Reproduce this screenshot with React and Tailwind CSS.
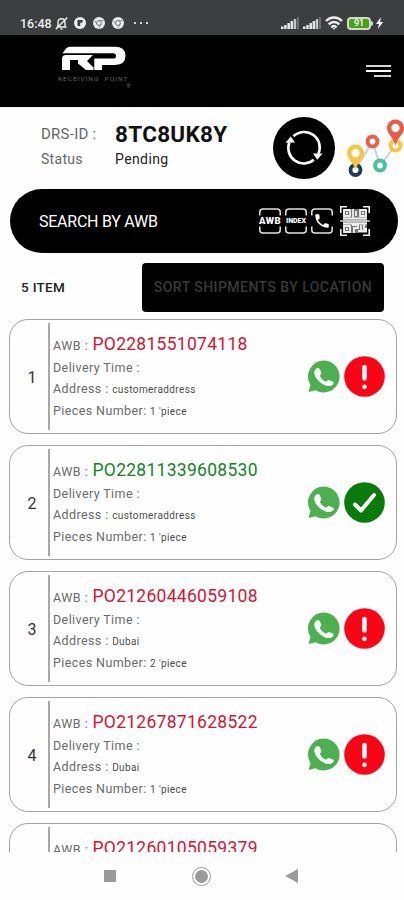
import { MdPhone } from "react-icons/md";

const shipments = [
    { id: 1, awb: "PO2281551074118", address: "customeraddress", pieces: 1, done: false },
    { id: 2, awb: "PO22811339608530", address: "customeraddress", pieces: 1, done: true },
    { id: 3, awb: "PO21260446059108", address: "Dubai", pieces: 2, done: false },
    { id: 4, awb: "PO21267871628522", address: "Dubai", pieces: 1, done: false },
    { id: 5, awb: "PO21260105059379", address: "Dubai", pieces: 1, done: false },
];

function Signal() {
    return (
        <svg className="w-[18px] h-3" viewBox="0 0 18 12" fill="#e4e6e6">
            <rect x="0" y="9.5" width="2.5" height="2.5" />
            <rect x="3.2" y="8" width="2.5" height="4" />
            <rect x="6.4" y="6" width="2.6" height="6" />
            <rect x="9.6" y="4" width="2.6" height="8" />
            <rect x="12.8" y="2" width="2.4" height="10" fill="#c4c7c7" />
            <rect x="16" y="0" width="2" height="12" fill="#6a6e6e" />
        </svg>
    );
}

function ChromeDot() {
    return (
        <svg className="w-3 h-3" viewBox="0 0 12 12">
            <circle cx="6" cy="6" r="6" fill="#e8eaea" />
            <circle cx="6" cy="6" r="2.4" fill="none" stroke="#75797a" strokeWidth="1" />
            <path d="M6 3.6h4.6M3.9 7.2L1.7 3.5M8.1 7.2L5.9 11" stroke="#75797a" strokeWidth=".8" />
        </svg>
    );
}

function StatusBar() {
    return (
        <div className="flex h-[35px] shrink-0 items-start bg-[#3b3f40] pl-5 pt-[16px] text-white">
            <span className="w-[33px] text-[12.5px] leading-[15px] font-medium text-[#eee]">16:48</span>
            <svg className="mt-px ml-[2px] w-[13px] h-[13px]" viewBox="0 0 13 13" fill="none" stroke="#eee" strokeWidth="1.4">
                <path d="M1.5 10h10M3 9.5V5.5C3 3 4.5 1.7 6.5 1.7S10 3 10 5.5v4M5.5 12h2M12.3.5L.8 12.3" />
            </svg>
            <svg className="mt-px ml-[6px] w-3 h-3" viewBox="0 0 12 12">
                <circle cx="6" cy="6" r="6" fill="#eee" />
                <path d="M3.5 3h5v2.8H6.2V9H3.5z" fill="#3b3f40" />
            </svg>
            <div className="ml-[7px] mt-px flex gap-[7px]">
                <ChromeDot />
                <ChromeDot />
            </div>
            <div className="ml-[10px] mt-[6px] flex gap-[4px]">
                <i className="h-[2px] w-[2px] bg-gray-300" />
                <i className="h-[2px] w-[2px] bg-gray-300" />
                <i className="h-[2px] w-[2px] bg-gray-300" />
            </div>
            <div className="ml-auto mr-[21px] flex items-center gap-[4px]">
                <Signal />
                <Signal />
                <svg className="w-[18px] h-[14px]" viewBox="0 0 18 14" fill="none" stroke="#eee" strokeWidth="2.4">
                    <path d="M1 5C5.5.3 12.5.3 17 5M3.7 8.3c3-3 7.6-3 10.6 0M6.3 11.3c1.7-1.6 3.7-1.6 5.4 0" />
                    <path d="M7.5 12L9 13.8l1.5-1.8z" fill="#eee" stroke="none" />
                </svg>
                <div className="flex items-center">
                    <div className="flex h-[13px] w-6 items-center justify-center rounded-[4px] border-2 border-[#d3d6d3] bg-[#43a514] text-[9px] leading-none font-medium">91</div>
                    <i className="h-[5px] w-[2px] rounded-r bg-[#d3d6d3]" />
                    <svg className="ml-[3px] w-[7px] h-3" viewBox="0 0 7 12" fill="#fff"><path d="M5 0L0 7h3L2 12l5-7H4z" /></svg>
                </div>
            </div>
        </div>
    );
}

function Header() {
    return (
        <div className="flex h-[72px] shrink-0 items-start justify-between bg-black">
            <div className="ml-[58px] mt-[11px] w-[73px]">
                <svg className="ml-1 block h-6 w-[64px]" viewBox="0 0 64 24" fill="#fff">
                    <path d="M.5 7.3L4 2.5Q5.5.7 8 .7H53Q63.5.7 63.5 9.800T53 19H40V24H32.3V12.600H51Q54 12.600 54 10T51 7.300z" />
                    <path d="M0 13Q0 9 4 9H31L25 15L31.5 21.500V24H24L16 17.500V14H8V24H0z" />
                </svg>
                <div className="mt-[6px] h-[7px] text-[6.5px] leading-[7px] whitespace-nowrap text-[#666] origin-left scale-y-75 tracking-[1px]">RECEIVING&nbsp; POINT</div>
                <div className="text-right text-[6px] leading-[6px] text-[#666]">®</div>
            </div>
            <div className="mr-[13px] mt-[30px] flex flex-col items-end gap-[3px]">
                <i className="h-[2px] w-[25px] bg-[#d6d6d6]" />
                <i className="h-[2px] w-[25px] bg-white" />
                <i className="h-[2px] w-[17px] bg-[#d6d6d6]" />
            </div>
        </div>
    );
}

function RouteIcon() {
    return (
        <svg className="w-[57px] h-[58px]" viewBox="0 0 57 58" fill="none">
            <path d="M8.5 51L25.5 22.5L33 46.5L48.5 26.5" stroke="#ccd0da" strokeWidth="2" />
            <circle cx="8.5" cy="51" r="5" fill="#fff" stroke="#1d3c55" strokeWidth="3.8" />
            <circle cx="25.5" cy="22.5" r="4.9" fill="#fff" stroke="#e8604c" strokeWidth="4" />
            <circle cx="33" cy="46.5" r="4.9" fill="#fff" stroke="#47bfa1" strokeWidth="4" />
            <circle cx="48.5" cy="26.5" r="4.9" fill="#fff" stroke="#f9c440" strokeWidth="4" />
            <path d="M8.5 51C7 44 0 40 0 34a8.5 8.5 0 0 1 17 0C17 40 10 44 8.5 51z" fill="#f9c440" />
            <circle cx="8.5" cy="34" r="4.2" fill="#fff" />
            <path d="M48.5 27C47 19 40 15 40 9a8.5 8.5 0 0 1 17 0C57 15 50 19 48.5 27z" fill="#ed5848" />
            <circle cx="48.5" cy="9" r="4.2" fill="#fff" />
        </svg>
    );
}

function Info() {
    return (
        <div className="flex h-[82px] shrink-0 border-t border-[#eee]">
            <div className="ml-[41px] mt-[15px] grid h-[50px] w-[190px] grid-cols-[74px_1fr] whitespace-nowrap">
                <span className="text-[15px] leading-[22px] tracking-[0.25px] text-[#666]">DRS-ID :</span>
                <span className="text-[22.5px] leading-[22px] font-bold tracking-[0.3px]">8TC8UK8Y</span>
                <span className="text-[14px] leading-[22px] text-[#666] tracking-[0.3px]">Status</span>
                <span className="text-[14px] leading-[22px] tracking-[0.4px] text-[#222]">Pending</span>
            </div>
            <div className="ml-[42px] mt-[9px] h-[62px] w-[62px] rounded-full bg-black">
                <svg viewBox="0 0 62 62" fill="none" stroke="#fff" strokeWidth="2.6">
                    <path d="M20.5 19.3A15.5 15.5 0 0 1 45.3 37M40.8 42.800A15.5 15.5 0 0 1 16.300 25.500" />
                    <path d="M12.500 25.800L17.800 19.500L22 25.500zM49.500 36.500L44.300 42.800L40 36.500z" fill="#fff" stroke="none" />
                </svg>
            </div>
            <div className="ml-[12px] mt-[11px]"><RouteIcon /></div>
        </div>
    );
}

function ScanFrame({ children }) {
    return (
        <div className="relative flex h-[26px] w-[22px] items-center justify-center">
            <svg className="absolute inset-0" viewBox="0 0 22 26" fill="none" stroke="#e2e2e2" strokeWidth="1.5">
                <path d="M.8 7.5V4Q.8 1 4 1H18Q21.2 1 21.2 4V7.5M.8 18.5V22Q.8 25 4 25H18Q21.2 25 21.2 22V18.5" />
            </svg>
            {children}
        </div>
    );
}

function QrIcon() {
    return (
        <svg className="ml-[3px] w-[30px] h-[30px]" viewBox="0 0 30 30" fill="none" stroke="#eee">
            <rect x="3" y="3" width="24" height="24" fill="#777" stroke="none" />
            <path d="M.8 7V.8H7M23 .8h6.2V7M.8 23v6.2H7M23 29.2h6.2V23" strokeWidth="1.6" />
            <path d="M4 4h6v6H4zM20 4h6v6h-6zM4 20h6v6H4zM13 3v9M16 5v5M12 19h6v3h-4v5M21 19v7M24 18v5h3M18 25h9M3 12.5h24M3 17.5h24" strokeWidth="1.8" />
            <path d="M6 7h2M22 7h2M6 23h2" strokeWidth="2" />
            <path d="M0 15h30" strokeWidth="1.3" />
        </svg>
    );
}

function SearchBar() {
    return (
        <div className="ml-[10px] flex h-[64px] w-[388px] shrink-0 items-center rounded-full bg-black pl-[29px] pr-[28px] text-white">
            <span className="text-[16px] font-normal tracking-[-0.25px] mt-[2px]">SEARCH BY AWB</span>
            <div className="ml-auto flex items-center gap-[4px]">
                <ScanFrame><span className="text-[9.5px] font-black tracking-[0.4px]">AWB</span></ScanFrame>
                <ScanFrame><span className="text-[7px] font-black">INDEX</span></ScanFrame>
                <ScanFrame><MdPhone className="h-[18px] w-[18px]" /></ScanFrame>
                <QrIcon />
            </div>
        </div>
    );
}

function WhatsappIcon() {
    return (
        <svg className="h-[33px] w-[33px]" viewBox="0 0 33 33">
            <path d="M17 .5a16 16 0 1 1-8.5 29.8L1.5 32L3.5 25A16 16 0 0 1 17 .5z" fill="#4caf50" />
            <path d="M9 8.7q2-1.7 3.7.3l1.6 3.7q.3 1.2-1.5 3q2 4.3 6.4 6q1.5-2 2.9-1.7l4.1 1.7q1.3 1-.4 3q-3.3 2.4-8 .5Q9 21 7.2 13.5Q7 10.5 9 8.7z" fill="#fff" />
        </svg>
    );
}

function StateIcon({ done }) {
    return (
        <svg className="h-[41px] w-[41px]" viewBox="0 0 41 41" fill="none" stroke="#fff" strokeLinecap="round" strokeLinejoin="round">
            <circle cx="20.5" cy="20.5" r="20.3" fill={done ? "#087b0b" : "#fc0316"} stroke="none" />
            {done ? <path d="M11 22.5l6 6L30 13" strokeWidth="4" /> : <path d="M20.5 11v11.5M20.5 30.8v.1" strokeWidth="4.5" />}
        </svg>
    );
}

function Shipment({ item }) {
    return (
        <div className="flex h-[115px] w-[388px] shrink-0 rounded-[19px] border border-[#a2a2a2] bg-[#fefefe]">
            <div className="mt-[3px] flex h-[107px] w-[40px] items-center justify-center border-r-2 border-[#a8a8a8] pl-[6px] pt-[3px] text-[16px] text-[#333]">{item.id}</div>
            <div className="ml-[3px] mt-[12px] text-[12.5px] leading-[21px] tracking-[0.4px] whitespace-nowrap text-[#6a6a6a]">
                <div className="flex h-[25px] items-baseline leading-[24px]">
                    <span className="w-[39.5px] tracking-[0.5px]">AWB :</span>
                    <span className={"text-[17.5px] tracking-[0.28px] " + (item.done ? "text-[#168326]" : "text-[#d21534]")}>{item.awb}</span>
                </div>
                <div>Delivery Time :</div>
                <div>Address : <span className="text-[10px] text-[#4c4c4c]">{item.address}</span></div>
                <div>Pieces Number: <span className="text-[10px] text-[#4c4c4c]">{item.pieces} 'piece</span></div>
            </div>
            <div className="ml-auto mr-[11px] flex items-center gap-[4px]">
                <WhatsappIcon />
                <StateIcon done={item.done} />
            </div>
        </div>
    );
}

export default function App() {
    return (
        <div className="flex h-[900px] w-[404px] flex-col overflow-hidden bg-[#fefefe] font-[Roboto,sans-serif] text-[#111]">
            <StatusBar />
            <Header />
            <Info />
            <SearchBar />
            <div className="mt-[10px] flex h-[48px] shrink-0 items-center pl-[21px]">
                <span className="w-[121px] text-[13.5px] font-medium tracking-[0.3px] text-[#222]">5 ITEM</span>
                <div className="flex h-[49px] w-[242px] items-center justify-center rounded-[4px] bg-black text-[14px] font-medium whitespace-nowrap text-[#393939] tracking-[0.45px]">SORT SHIPMENTS BY LOCATION</div>
            </div>
            <div className="ml-[9px] mt-[8px] flex h-[533px] shrink-0 flex-col gap-[11px] overflow-hidden">
                {shipments.map((item) => <Shipment key={item.id} item={item} />)}
            </div>
            <div className="flex h-[48px] items-center pl-[104px]">
                <i className="h-3 w-3 bg-[#9b9b9b]" />
                <div className="ml-[76px] flex h-[19px] w-[19px] items-center justify-center rounded-full border border-[#9b9b9b]"><i className="h-[13px] w-[13px] rounded-full bg-[#9b9b9b]" /></div>
                <svg className="ml-[74px] h-[14px] w-[13px]" viewBox="0 0 13 14" fill="#9b9b9b"><path d="M13 0v14L0 7z" /></svg>
            </div>
        </div>
    );
}
